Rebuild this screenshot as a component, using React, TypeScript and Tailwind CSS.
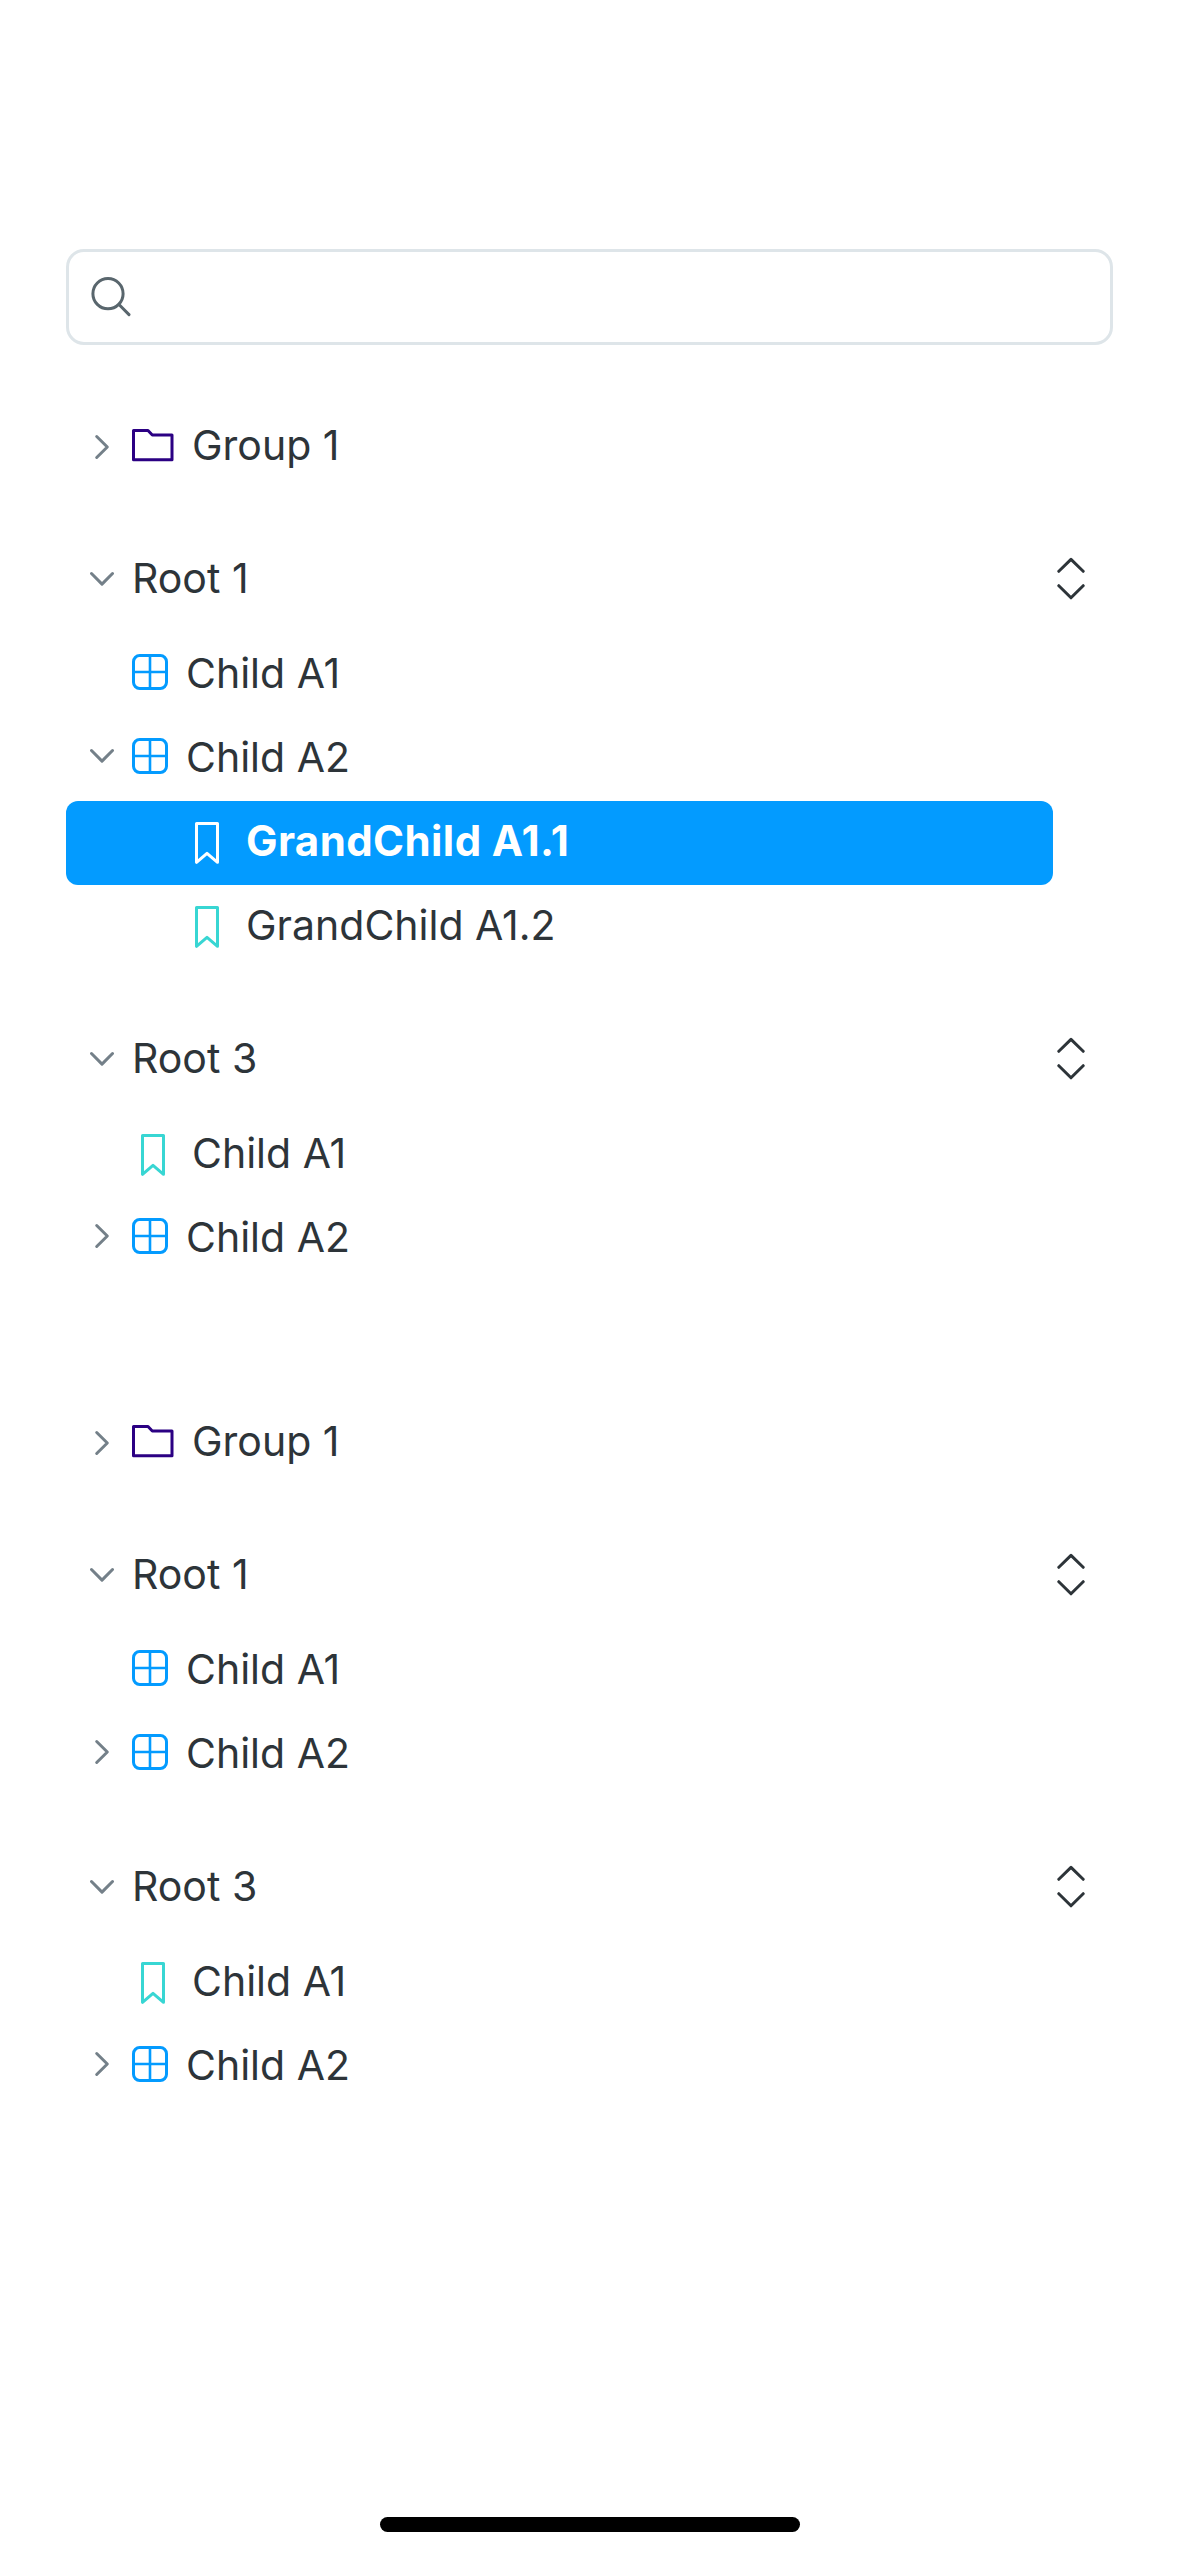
import type { ReactNode } from "react";

type IconKind = "folder" | "grid" | "bookmark";

function ChevronRight() {
  return (
    <svg width="24" height="28" viewBox="0 0 24 28" fill="none" stroke="#748089" strokeWidth="3" strokeLinecap="round" strokeLinejoin="round">
      <path d="M6.7 3.5 17.3 14 6.7 24.5" />
    </svg>
  );
}

function ChevronDown() {
  return (
    <svg width="24" height="28" viewBox="0 0 24 28" fill="none" stroke="#748089" strokeWidth="3" strokeLinecap="round" strokeLinejoin="round">
      <path d="M1.5 8.5 12 19.1 22.5 8.5" />
    </svg>
  );
}

function FolderIcon() {
  return (
    <svg width="42" height="42" viewBox="0 0 42 42" fill="none" stroke="#2b0083" strokeWidth="3" strokeLinejoin="round">
      <path d="M1.5 6.5H16L20.3 11H40V35.7H1.5Z" />
    </svg>
  );
}

function GridIcon() {
  return (
    <svg width="36" height="36" viewBox="0 0 36 36" fill="none" stroke="#039bff">
      <rect x="1.5" y="1.5" width="33" height="33" rx="6.2" strokeWidth="3" />
      <path d="M18 2v32M2 18h32" strokeWidth="2.6" />
    </svg>
  );
}

function BookmarkIcon({ color }: { color: string }) {
  return (
    <svg width="24" height="42" viewBox="0 0 24 42" fill="none" stroke={color} strokeWidth="3" strokeLinejoin="round">
      <path d="M1.5 1.5H22.5V40.3L12 31.3 1.5 40.3Z" />
    </svg>
  );
}

function UnfoldIcon() {
  return (
    <svg width="28" height="44" viewBox="0 0 28 44" fill="none" stroke="#2d3439" strokeWidth="3" strokeLinecap="round" strokeLinejoin="round">
      <path d="M1.8 14.3 14 2.4 26.2 14.3M1.8 28.7 14 40.8 26.2 28.7" />
    </svg>
  );
}

function Toggle({ children }: { children?: ReactNode }) {
  return <span className="flex w-[66px] shrink-0 pl-6">{children}</span>;
}

function Label({ bold, children }: { bold?: boolean; children: ReactNode }) {
  return bold ? (
    <span className="-mt-1 text-[42px] leading-[60px] font-bold tracking-[0.4px] whitespace-nowrap text-white">{children}</span>
  ) : (
    <span className="-mt-1 text-[41px] leading-[60px] whitespace-nowrap">{children}</span>
  );
}

function Item({
  icon,
  label,
  open,
  nested,
  selected,
}: {
  icon: IconKind;
  label: string;
  open?: boolean;
  nested?: boolean;
  selected?: boolean;
}) {
  return (
    <div className={`flex h-[84px] w-[987px] items-center ${selected ? "rounded-xl bg-[#039bff]" : ""}`}>
      <div className={icon === "folder" ? "" : "-mt-1.5"}>
        <Toggle>{open === undefined ? null : open ? <ChevronDown /> : <ChevronRight />}</Toggle>
      </div>
      {icon === "folder" && (
        <span className="-mt-1 flex w-[60px] shrink-0">
          <FolderIcon />
        </span>
      )}
      {icon === "grid" && (
        <span className="-mt-1.5 flex w-[54px] shrink-0">
          <GridIcon />
        </span>
      )}
      {icon === "bookmark" && (
        <span className={nested ? "flex w-[114px] shrink-0 pl-[63px]" : "flex w-[60px] shrink-0 pl-[9px]"}>
          <BookmarkIcon color={selected ? "#ffffff" : "#38d6d3"} />
        </span>
      )}
      <Label bold={selected}>{label}</Label>
    </div>
  );
}

function Root({ label, children }: { label: string; children: ReactNode }) {
  return (
    <section className="mt-[49px]">
      <div className="mb-[11px] flex h-[84px] items-center pr-[27px]">
        <div className="-mt-0.5">
          <Toggle>
            <ChevronDown />
          </Toggle>
        </div>
        <Label>{label}</Label>
        <span className="-mt-0.5 ml-auto flex">
          <UnfoldIcon />
        </span>
      </div>
      {children}
    </section>
  );
}

function Tree({ expanded }: { expanded?: boolean }) {
  return (
    <div>
      <Item icon="folder" label="Group 1" open={false} />
      <Root label="Root 1">
        <Item icon="grid" label="Child A1" />
        <Item icon="grid" label="Child A2" open={!!expanded} />
        {expanded && (
          <>
            <Item icon="bookmark" label="GrandChild A1.1" nested selected />
            <Item icon="bookmark" label="GrandChild A1.2" nested />
          </>
        )}
      </Root>
      <Root label="Root 3">
        <Item icon="bookmark" label="Child A1" />
        <Item icon="grid" label="Child A2" open={false} />
      </Root>
    </div>
  );
}

export default function App() {
  return (
    <main className="flex h-[2556px] w-[1178px] flex-col bg-white pr-[65px] pl-[66px] pt-[249px] pb-6 font-['Inter',sans-serif] text-[#2d3439]">
      <div className="flex h-24 shrink-0 items-center rounded-[18px] border-[3px] border-[#dee5e9] pl-[22px]">
        <svg width="40" height="40" viewBox="0 0 40 40" fill="none" stroke="#59666d" strokeWidth="3" strokeLinecap="round">
          <circle cx="17" cy="16.7" r="15.1" />
          <path d="M28 27.5 38 37.6" />
        </svg>
      </div>
      <div className="mt-[60px] flex flex-col gap-[120px] pr-px">
        <Tree expanded />
        <Tree />
      </div>
      <div className="mt-auto h-[15px] w-[420px] self-center rounded-full bg-black" />
    </main>
  );
}
